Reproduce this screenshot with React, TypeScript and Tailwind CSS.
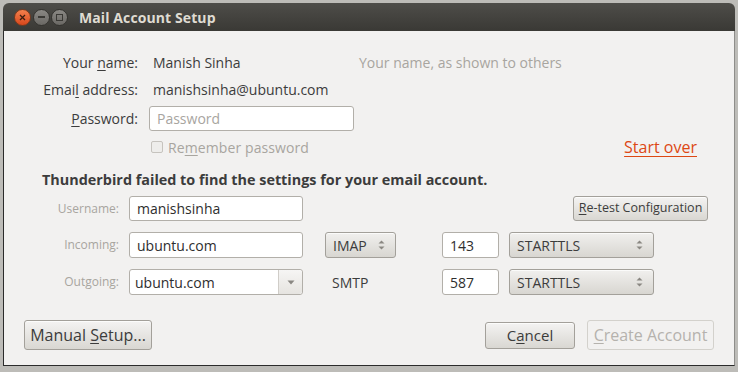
import React from "react";

const font = { fontFamily: '"Open Sans", "DejaVu Sans", sans-serif' };

function UpDown({ className = "" }: { className?: string }) {
  return (
    <svg width="7" height="12" viewBox="0 0 7 12" className={className}>
      <path d="M0.5 4.5 L3.5 1.5 L6.5 4.5 Z" fill="#8a8782" />
      <path d="M0.5 7.5 L3.5 10.5 L6.5 7.5 Z" fill="#8a8782" />
    </svg>
  );
}

function Select({ label, w }: { label: string; w: string }) {
  return (
    <div
      className={`${w} h-[26px] flex items-center justify-between pl-[7px] pr-[10px] rounded-[3px] border border-[#a3a09a] bg-gradient-to-b from-[#f1f0ee] to-[#d8d6d1] text-[14px] text-[#3c3c3c] shadow-[inset_0_1px_0_#fbfbfa]`}
    >
      <span>{label}</span>
      <UpDown />
    </div>
  );
}

function Button({ children, className = "", disabled = false }: { children: React.ReactNode; className?: string; disabled?: boolean }) {
  return (
    <div
      className={`flex items-center justify-center rounded-[3px] border ${
        disabled
          ? "border-[#d3d1cc] bg-[#f2f1f0] text-[#b5b2ad]"
          : "border-[#a3a09a] bg-gradient-to-b from-[#f4f3f2] to-[#d9d7d2] text-[#3c3c3c] shadow-[inset_0_1px_0_#fcfcfb]"
      } ${className}`}
    >
      {children}
    </div>
  );
}

function Input({ children, className = "", placeholder = false }: { children: React.ReactNode; className?: string; placeholder?: boolean }) {
  return (
    <div
      className={`flex items-center rounded-[3px] border border-[#b2afa9] bg-white pl-[7px] text-[14px] ${
        placeholder ? "text-[#a8a59f]" : "text-[#2e2e2e]"
      } ${className}`}
    >
      {children}
    </div>
  );
}

export default function App() {
  return (
    <div className="w-[738px] h-[372px] bg-[#bdbcb8] overflow-hidden pt-[3px] pl-[3px]" style={font}>
      <div className="w-[732px] h-[363px] flex flex-col">
        {/* Title bar */}
        <div className="h-[28px] shrink-0 rounded-t-[6px] bg-gradient-to-b from-[#4e4d49] to-[#3a3935] flex items-center pl-[11px]">
          <div className="w-[17px] h-[17px] rounded-full bg-gradient-to-b from-[#f3804c] to-[#d8461a] border border-[#7a3a1e] flex items-center justify-center">
            <svg width="7" height="7" viewBox="0 0 7 7">
              <path d="M1 1 L6 6 M6 1 L1 6" stroke="#3a1e10" strokeWidth="1.3" />
            </svg>
          </div>
          <div className="ml-[2px] w-[17px] h-[17px] rounded-full bg-gradient-to-b from-[#8a8884] to-[#6a6864] border border-[#34332f] flex items-center justify-center">
            <div className="w-[7px] h-[1.5px] bg-[#3a3935]" />
          </div>
          <div className="ml-[1px] w-[17px] h-[17px] rounded-full bg-gradient-to-b from-[#8a8884] to-[#6a6864] border border-[#34332f] flex items-center justify-center">
            <div className="w-[7px] h-[7px] border border-[#3a3935]" />
          </div>
          <div className="ml-[11px] text-[14px] font-bold text-[#dfdbd2] tracking-[0.1px]">Mail Account Setup</div>
        </div>

        {/* Body */}
        <div className="flex-1 bg-[#f2f1f0] border-l border-b border-[#2b2b2b] border-r-[1px] border-r-[#8e8d8a] flex flex-col text-[#3c3c3c]">
          {/* Identity */}
          <div className="pt-[18px] text-[14px]">
            <div className="h-[26px] flex items-center">
              <div className="w-[134px] text-right text-[#3c3c3c]">
                Your <span className="underline underline-offset-2">n</span>ame:
              </div>
              <div className="w-[210px] ml-[11px] pl-[4px]">Manish Sinha</div>
              <div className="text-[#a8a59f]">Your name, as shown to others</div>
            </div>
            <div className="h-[28px] flex items-center">
              <div className="w-[134px] text-right">
                Emai<span className="underline underline-offset-2">l</span> address:
              </div>
              <div className="ml-[11px] pl-[4px]">manishsinha@ubuntu.com</div>
            </div>
            <div className="h-[30px] flex items-center">
              <div className="w-[134px] text-right">
                <span className="underline underline-offset-2">P</span>assword:
              </div>
              <Input className="ml-[11px] w-[205px] h-[25px]" placeholder>
                Password
              </Input>
            </div>
            <div className="h-[28px] flex items-center">
              <div className="w-[134px]" />
              <div className="ml-[13px] w-[12px] h-[12px] rounded-[2px] border border-[#c6c3be] bg-[#eeedeb]" />
              <div className="ml-[5px] text-[#a8a59f] tracking-[0.1px]">
                Re<span className="underline underline-offset-2">m</span>ember password
              </div>
              <div className="ml-auto mr-[37px] text-[#dd4814] underline underline-offset-[3px] text-[16px]">Start over</div>
            </div>
          </div>

          {/* Heading */}
          <div className="mt-[9px] pl-[38px] text-[14.4px] font-bold text-[#3c3c3c] h-[20px] flex items-center">
            Thunderbird failed to find the settings for your email account.
          </div>

          {/* Server rows */}
          <div className="mt-[6px] flex flex-col gap-[11px] text-[14px]">
            <div className="h-[25px] flex items-center">
              <div className="w-[115px] text-right text-[12px] text-[#a8a59f]">Username:</div>
              <Input className="ml-[10px] w-[174px] h-[25px]">manishsinha</Input>
              <Button className="ml-auto mr-[26px] w-[135px] h-[25px] text-[12.5px]">
                <span>
                  <span className="underline underline-offset-2">R</span>e-test Configuration
                </span>
              </Button>
            </div>
            <div className="h-[26px] flex items-center">
              <div className="w-[115px] text-right text-[12px] text-[#a8a59f]">Incoming:</div>
              <Input className="ml-[10px] w-[174px] h-[26px]">ubuntu.com</Input>
              <div className="ml-[22px]">
                <Select label="IMAP" w="w-[71px]" />
              </div>
              <Input className="ml-[46px] w-[57px] h-[26px]">143</Input>
              <div className="ml-[10px]">
                <Select label="STARTTLS" w="w-[145px]" />
              </div>
            </div>
            <div className="h-[26px] flex items-center">
              <div className="w-[115px] text-right text-[12px] text-[#a8a59f]">Outgoing:</div>
              <div className="ml-[10px] w-[174px] h-[26px] flex rounded-[3px] border border-[#b2afa9] bg-white">
                <div className="flex-1 flex items-center pl-[5px] text-[#2e2e2e]">ubuntu.com</div>
                <div className="w-[24px] border-l border-[#d0cdc8] bg-gradient-to-b from-[#f6f5f4] to-[#e6e4e0] flex items-center justify-center rounded-r-[3px]">
                  <svg width="8" height="5" viewBox="0 0 8 5">
                    <path d="M0.5 0.5 L7.5 0.5 L4 4.5 Z" fill="#8a8782" />
                  </svg>
                </div>
              </div>
              <div className="ml-[29px] w-[110px]">SMTP</div>
              <Input className="w-[57px] h-[26px]">587</Input>
              <div className="ml-[10px]">
                <Select label="STARTTLS" w="w-[145px]" />
              </div>
            </div>
          </div>

          {/* Bottom buttons */}
          <div className="mt-auto mb-[15px] flex items-center text-[16px]">
            <Button className="ml-[20px] w-[128px] h-[30px]">
              <span>
                Manual <span className="underline underline-offset-2">S</span>etup...
              </span>
            </Button>
            <Button className="ml-auto w-[90px] h-[27px] text-[15px]">
              <span>
                C<span className="underline underline-offset-2">a</span>ncel
              </span>
            </Button>
            <Button className="ml-[12px] mr-[20px] w-[127px] h-[30px]" disabled>
              <span>
                <span className="underline underline-offset-2">C</span>reate Account
              </span>
            </Button>
          </div>
        </div>
      </div>
    </div>
  );
}
